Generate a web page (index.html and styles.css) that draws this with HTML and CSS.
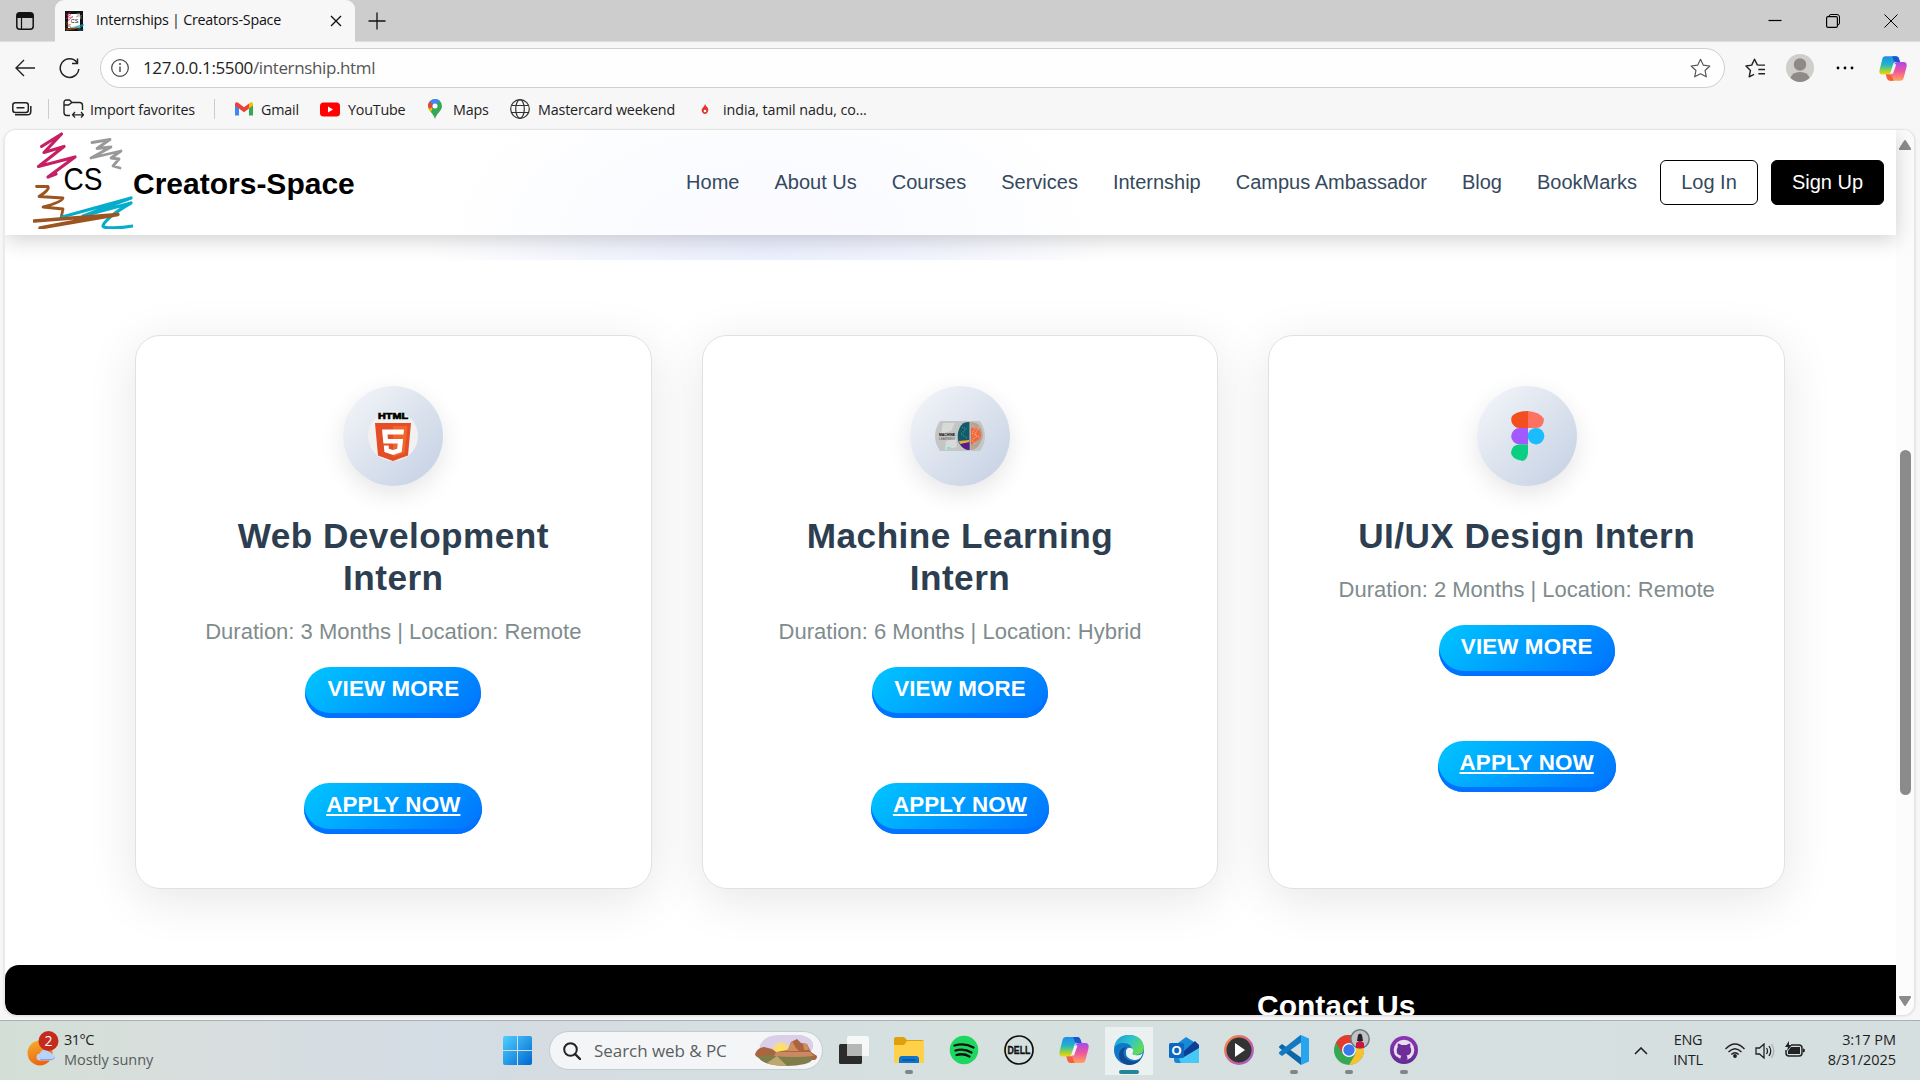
FILE: index.html
```html
<!DOCTYPE html>
<html lang="en">
<head>
<meta charset="utf-8">
<title>Internships | Creators-Space</title>
<link rel="stylesheet" href="styles.css">
</head>
<body>
<svg class="defs" width="0" height="0">
  <defs>
    <linearGradient id="cpA" x1="0" y1="0" x2="0" y2="1"><stop offset="0" stop-color="#1f8cf0"/><stop offset=".45" stop-color="#22b5c8"/><stop offset=".75" stop-color="#8fd04b"/><stop offset="1" stop-color="#ffd400"/></linearGradient>
    <linearGradient id="cpB" x1="0" y1="0" x2="0" y2="1"><stop offset="0" stop-color="#a44bf0"/><stop offset=".5" stop-color="#f0569a"/><stop offset="1" stop-color="#ffa45c"/></linearGradient>
    <linearGradient id="win" x1="0" y1="0" x2="1" y2="1"><stop offset="0" stop-color="#4fd0ff"/><stop offset="1" stop-color="#0067cf"/></linearGradient>
    <linearGradient id="edgeTop" x1="0" y1="0" x2="1" y2=".6"><stop offset="0" stop-color="#1695dc"/><stop offset=".5" stop-color="#2dc3cf"/><stop offset="1" stop-color="#63dc55"/></linearGradient>
    <linearGradient id="sun" x1="0" y1="0" x2=".4" y2="1"><stop offset="0" stop-color="#f5b32e"/><stop offset="1" stop-color="#ef6511"/></linearGradient>
    <linearGradient id="ring" x1="0" y1="0" x2="1" y2="1"><stop offset="0" stop-color="#ff8a35"/><stop offset=".6" stop-color="#c65f9f"/><stop offset="1" stop-color="#9b63d8"/></linearGradient>
    <linearGradient id="gh" x1="0" y1="0" x2="0" y2="1"><stop offset="0" stop-color="#8e35b5"/><stop offset="1" stop-color="#602a8f"/></linearGradient>
    <symbol id="copilot" viewBox="0 0 30 28">
      <path d="M7 1h11c2 0 3 1 3.600 3l1 3h-4c-2 0-3 1-3.600 3l-2.500 8c-.5 1.500-1.500 2.500-3 2.500H3.500C1 20.500-.2 18.500.6 15.500L3.500 4C4 2 5 1 7 1Z" fill="url(#cpA)"/>
      <path d="M14 1h4c2 0 3 1 3.600 3l1 3h-4c-2 0-3-1-3.400-3-.3-1.500-.6-2.500-1.200-3Z" fill="#1c55cf"/>
      <path d="M23 27H12c-2 0-3-1-3.600-3l-1-3.500h3c2 0 3-1 3.600-3l2.500-8c.5-1.500 1.500-2.500 3-2.500h7c2.500 0 3.700 2 3 5L26.500 24c-.5 2-1.500 3-3.500 3Z" fill="url(#cpB)"/>
      <path d="M16 27h-4c-2 0-3-1-3.600-3l-1-3.500h3c2 0 3.400 1 3.900 3 .3 1.500 1 2.900 1.700 3.500Z" fill="#f4603a"/>
      <path d="M16 9.500h2.500L15 19.500h-3Z" fill="#f3f5f5"/>
    </symbol>
    <symbol id="scribble" viewBox="0 0 100 98">
      <g fill="none" stroke-linejoin="round" stroke-linecap="round">
        <path d="M8.500 15.500 28.500 3 11 21.500 31 15.500 5.500 35.500 42 26 15 46 23 43" stroke="#c61f62" stroke-width="3.200"/>
        <path d="M59 11.500 77 8.500 64 17.500 78 16 58 27 88 20 78 27 86 28 80 35 87 37" stroke="#999" stroke-width="2.800"/>
        <path d="M3.500 55.500H15q2 3-9 10l24 1.500q-1 4-20 9l20 2-2 9" stroke="#9c5420" stroke-width="2.800"/>
        <path d="M29 86 98 67 50 85 98 72 C80 82 70 92 70 95 S88 97 100 95" stroke="#05accb" stroke-width="3.200"/>
        <path d="M1 90 85 83.500 7 97 60 87" stroke="#9c5420" stroke-width="3.400"/>
      </g>
      <text x="30.500" y="59" font-family="Liberation Sans, Arial, sans-serif" font-size="31" textLength="39" lengthAdjust="spacingAndGlyphs">CS</text>
    </symbol>
  </defs>
</svg>

<div class="window">
  <header class="tabbar">
    <svg class="tab-menu" viewBox="0 0 18 18"><rect x=".8" y=".8" width="16.400" height="16.400" rx="3" fill="none" stroke="#111" stroke-width="1.500"/><path d="M1 6V3.500Q1 1 3.500 1h11Q17 1 17 3.500V6Z" fill="#111"/><path d="M5.500 5v12" stroke="#111" stroke-width="1.200"/></svg>
    <div class="tab">
      <svg class="favicon" viewBox="0 0 19 20"><rect width="18" height="20" fill="#111"/><rect x="3" y="3" width="12" height="14" fill="#fff"/><use href="#scribble" x="0" y="0" width="19" height="20"/></svg>
      <span class="tab-title">Internships | Creators-Space</span>
      <svg class="tab-close" viewBox="0 0 12 12"><path d="m1 1 10 10M11 1 1 11" stroke="#111" stroke-width="1.400"/></svg>
    </div>
    <svg class="new-tab" viewBox="0 0 18 18"><path d="M9 .5v17M.5 9h17" stroke="#111" stroke-width="1.300"/></svg>
    <div class="window-buttons">
      <svg viewBox="0 0 14 14"><path d="M.5 6.500h13" stroke="#000" stroke-width="1.200"/></svg>
      <svg viewBox="0 0 14 14"><path d="M3 2.500q0-2 2-2h6q2.500 0 2.500 2.500v6q0 2-2 2" fill="none" stroke="#000"/><rect x=".6" y="2.600" width="10.800" height="10.800" rx="1.500" fill="none" stroke="#000" stroke-width="1.200"/></svg>
      <svg viewBox="0 0 14 14"><path d="m.5.5 13 13M13.500.5l-13 13" stroke="#000"/></svg>
    </div>
  </header>

  <div class="toolbar">
    <svg class="back" viewBox="0 0 20 18"><path d="M9 1 1 9l8 8M1 9h19" fill="none" stroke="#222" stroke-width="1.400"/></svg>
    <svg class="reload" viewBox="0 0 21 21"><path d="M18 4.500A9.300 9.300 0 1 0 19.800 11M18.500.5v5h-5.500" fill="none" stroke="#222" stroke-width="1.500"/></svg>
    <div class="address">
      <svg class="info" viewBox="0 0 18 18"><circle cx="9" cy="9" r="8.300" fill="none" stroke="#444" stroke-width="1.200"/><path d="M9 7.500v5.500" stroke="#444" stroke-width="1.400"/><circle cx="9" cy="5" r="1" fill="#444"/></svg>
      <span class="url">127.0.0.1:5500<i>/internship.html</i></span>
      <svg class="star" viewBox="0 0 22 21"><path d="m11 1.300 3 6.200 6.800.9-5 4.700 1.300 6.700-6.100-3.300-6.100 3.300 1.300-6.700-5-4.700 6.800-.9Z" fill="none" stroke="#555" stroke-width="1.200" stroke-linejoin="round"/></svg>
    </div>
    <svg class="favs" viewBox="0 0 22 21"><path d="m13 7.500-3-6.200-3 6.200-6 .9 4.700 4.700-1.300 6.700 5-2.700M13 7.500h8M14 12h7M14 16.500h7" fill="none" stroke="#222" stroke-width="1.500" stroke-linejoin="round"/></svg>
    <svg class="avatar" viewBox="0 0 28 28"><circle cx="14" cy="14" r="14" fill="#d0ceca"/><circle cx="14" cy="10.500" r="6.200" fill="#8d8a87"/><path d="M4.500 24Q6 18 14 18t9.500 6Q19 28 14 28t-9.500-4Z" fill="#8d8a87"/></svg>
    <svg class="dots" viewBox="0 0 18 4"><circle cx="2" cy="2" r="1.400"/><circle cx="9" cy="2" r="1.400"/><circle cx="16" cy="2" r="1.400"/></svg>
    <svg class="copilot"><use href="#copilot"/></svg>
  </div>

  <div class="bookmarks">
    <svg class="bm-hide" viewBox="0 0 20 14"><rect x=".8" y=".8" width="15.500" height="9.800" rx="2.500" fill="none" stroke="#222" stroke-width="1.500"/><path d="M4.500 5.700h8M3 12.800h12.500q3.300 0 3.300-3.300V4" fill="none" stroke="#222" stroke-width="1.500"/></svg>
    <i class="rule rule-a"></i>
    <svg class="bm-folder" viewBox="0 0 21 20"><path d="M7 16.500H4Q1 16.500 1 13.500V3.500Q1 1 3.500 1h3l2.500 2.500h7.500q3 0 3 3V11M1 6h4.500L9 3.500" fill="none" stroke="#222" stroke-width="1.400"/><path d="m12 13-2.500 2.800L12 18.600M18 13l2.500 2.800-2.500 2.800M9.500 15.800h11" fill="none" stroke="#222" stroke-width="1.300"/></svg>
    <span class="bm-text t-import">Import favorites</span>
    <i class="rule rule-b"></i>
    <svg class="bm-gmail" viewBox="0 0 18 14"><path d="M0 2v11.500h4V5Z" fill="#4285f4"/><path d="M18 2v11.500h-4V5Z" fill="#34a853"/><path d="M14 6.500V1.600l1.200-1Q18-.6 18 2.400v1.200Z" fill="#fbbc04"/><path d="M0 3.600V2.400Q0-.6 2.800.6L9 5.200 14 1.500v5L9 10.200Z" fill="#ea4335"/></svg>
    <span class="bm-text t-gmail">Gmail</span>
    <svg class="bm-yt" viewBox="0 0 20 14"><rect width="20" height="14" rx="3.500" fill="#f00"/><path d="m8 4 5 3-5 3Z" fill="#fff"/></svg>
    <span class="bm-text t-yt">YouTube</span>
    <svg class="bm-map" viewBox="0 0 14 20"><path d="M7 0a7 7 0 0 1 7 7c0 5-5 6.500-7 13C5 13.500 0 12 0 7a7 7 0 0 1 7-7Z" fill="#34a853"/><path d="M0 7.500 4.500 9 3 13Q0 10.500 0 7.500Z" fill="#fbbc04"/><path d="M7 0a7 7 0 0 1 5 2L4 9.500 1.700 2.600Q4 0 7 0Z" fill="#4285f4"/><path d="M1.700 2.600 5 5.500 2 10Q0 8 0 6.500t1.700-3.900Z" fill="#ea4335"/><circle cx="7" cy="7" r="2.500" fill="#fff"/></svg>
    <span class="bm-text t-map">Maps</span>
    <svg class="bm-globe" viewBox="0 0 20 20" fill="none" stroke="#333" stroke-width="1.200"><circle cx="10" cy="10" r="9.300"/><ellipse cx="10" cy="10" rx="4.300" ry="9.300"/><path d="M1.500 6.500h17M1.500 13.500h17"/></svg>
    <span class="bm-text t-master">Mastercard weekend</span>
    <svg class="bm-drop" viewBox="0 0 8 10"><path d="M4 0q1 2 2.500 3.500Q8 5 7 7.500 6 10 4 10T.8 7.500Q0 5 2 3.500 3.500 2 4 0Z" fill="#e3342b"/><circle cx="4" cy="7" r="1.300" fill="#fff"/></svg>
    <span class="bm-text t-india">india, tamil nadu, co...</span>
  </div>

  <div class="viewport">
    <div class="page">
      <nav class="nav">
        <svg class="logo"><use href="#scribble"/></svg>
        <strong class="brand">Creators-Space</strong>
        <div class="links">
          <a>Home</a><a>About Us</a><a>Courses</a><a>Services</a><a>Internship</a><a>Campus Ambassador</a><a>Blog</a><a>BookMarks</a>
        </div>
        <a class="login">Log In</a>
        <a class="signup">Sign Up</a>
      </nav>
      <div class="hero-end"></div>
      <main class="cards">
        <article class="card">
          <div class="icon"><svg viewBox="0 0 50 50"><circle cx="25" cy="25" r="25" fill="#f1f1f1"/><text x="10" y="8" font-family="Liberation Sans, Arial, sans-serif" font-weight="bold" font-size="9" stroke="#000" stroke-width=".7" textLength="30" lengthAdjust="spacingAndGlyphs">HTML</text><path d="M7 12h36l-3 32.500L25 50l-15-5.500Z" fill="#e44d26"/><path d="M25 15h14.500l-2.700 27L25 46Z" fill="#f16529"/><path d="M14 18.500h22l-.5 5H19.500l.4 4.500h15.200l-1.300 13-8.800 3-8.600-3-.6-6.500h4.800l.3 3.300 4.100 1.300 4.200-1.300.5-5.300H15.400Z" fill="#fff"/></svg></div>
          <h2>Web Development Intern</h2>
          <p>Duration: 3 Months | Location: Remote</p>
          <button class="btn">VIEW MORE</button>
          <a class="btn apply">APPLY NOW</a>
        </article>
        <article class="card">
          <div class="icon"><svg viewBox="0 0 50 50"><path d="M5 10h40q10 15 0 30H5Q-5 25 5 10Z" fill="#c4c6c6"/><path d="M8 12h12l-4 8-10 3ZM11 30l10-3 1 9-12 3Z" fill="#d8dada"/><text x="4" y="25" font-family="Liberation Sans, Arial, sans-serif" font-weight="bold" font-size="4" textLength="16" lengthAdjust="spacingAndGlyphs">MACHINE</text><text x="4" y="29" font-family="Liberation Sans, Arial, sans-serif" font-size="4" fill="#555" textLength="16" lengthAdjust="spacingAndGlyphs">LEARNING</text><path d="M34.500 11q-7-1-10 6t-1 14q4 8 11 8Z" fill="#15596a"/><path d="M24 31q4 8 10.500 8V29Z" fill="#5b1b88"/><path d="m24 30 10.500-1v2L25 33Z" fill="#e5b53b"/><path d="M35.500 11q8 0 11 7t-1 13q-3 8-10 8Z" fill="#b7a294"/><path d="M36 17q6-1 9 3 3 8-4 10l-5 4Z" fill="#ef6844"/><path d="m37 14 3 4-3 4 5 3-5 4 3 4M44 16l-4 7 5 4" fill="none" stroke="#ffc36a" stroke-width="1" stroke-dasharray="1 1"/><path d="m27 16 4 2-5 5 6 4" fill="none" stroke="#2c9a8c" stroke-width="1.200" stroke-dasharray="1 1"/><path d="M12 37h4" stroke="#72e5de" stroke-width="2"/></svg></div>
          <h2>Machine Learning Intern</h2>
          <p>Duration: 6 Months | Location: Hybrid</p>
          <button class="btn">VIEW MORE</button>
          <a class="btn apply">APPLY NOW</a>
        </article>
        <article class="card">
          <div class="icon"><svg viewBox="0 0 50 50"><path d="M26 0v17h-9a8.500 8.500 0 0 1-7-12Q15 0 26 0Z" fill="#f24e1e"/><path d="M26 0q12 1 16 8-.5 9-8 9h-8Z" fill="#ff7262"/><path d="M26 17v16.500h-8.500a8.250 8.250 0 0 1 0-16.500Z" fill="#a259ff"/><circle cx="34" cy="25.200" r="8.300" fill="#1abcfe"/><path d="M26 33.500V42q-1 7-5 8-12-2-12-8.500 1-8 8.500-8Z" fill="#0acf83"/></svg></div>
          <h2>UI/UX Design Intern</h2>
          <p>Duration: 2 Months | Location: Remote</p>
          <button class="btn">VIEW MORE</button>
          <a class="btn apply">APPLY NOW</a>
        </article>
      </main>
      <footer class="footer"><h3>Contact Us</h3></footer>
    </div>
    <div class="scrollbar">
      <svg viewBox="0 0 12 10"><path d="M6 0q.7 0 1.200 1L12 8.500q.3 1.500-1 1.500H1Q-.3 10 0 8.500L4.800 1Q5.300 0 6 0Z" fill="#8b8b8b"/></svg>
      <i class="thumb"></i>
      <svg class="down" viewBox="0 0 12 10"><path d="M6 0q.7 0 1.200 1L12 8.500q.3 1.500-1 1.500H1Q-.3 10 0 8.500L4.800 1Q5.300 0 6 0Z" fill="#8b8b8b"/></svg>
    </div>
  </div>

  <div class="taskbar">
    <div class="weather">
      <svg viewBox="0 0 32 35"><circle cx="13" cy="22" r="12.500" fill="url(#sun)"/><path d="M13 29.500a3.500 3.500 0 0 1 0-7 5 5 0 0 1 9-1.500 4 4 0 0 1 3 2q3 .5 3 3t-3 3.500Z" fill="#b9d2fb"/><path d="M13 28.500h12q2-.5 2.500-2" fill="none" stroke="#7fa6e8"/><circle cx="21.500" cy="10" r="10" fill="#c42b1c"/><text x="21.500" y="15" text-anchor="middle" font-family="Open Sans, sans-serif" font-size="14" fill="#fff">2</text></svg>
      <div class="weather-text"><span class="temp">31°C</span><span class="sky">Mostly sunny</span></div>
    </div>
    <svg class="start" viewBox="0 0 29 29"><path d="M2 0h12v14H0V2Q0 0 2 0ZM15 0h12q2 0 2 2v12H15ZM0 15h14v14H2q-2 0-2-2ZM15 15h14v12q0 2-2 2H15Z" fill="url(#win)"/></svg>
    <div class="search">
      <svg class="lens" viewBox="0 0 18 18"><circle cx="7.500" cy="7.500" r="6.300" fill="none" stroke="#222" stroke-width="2"/><path d="m12 12 5 5" stroke="#222" stroke-width="2.400" stroke-linecap="round"/></svg>
      <span>Search web &amp; PC</span>
      <svg class="scene" viewBox="0 0 62 31"><path d="M5 10Q10 0 24 0h22q14 3 12 13L54 20H4Z" fill="#d9cfe8"/><circle cx="26" cy="15" r="8" fill="#f6d98c"/><circle cx="26" cy="15" r="4.500" fill="#ffe25a"/><path d="M0 19q2-6 9-7l8 2 4 3 12-2 3-8 6-3 4 4 6 1 4 8 6 4q0 4-3 4l-52-1Q0 22 0 19Z" fill="#a9653f"/><path d="m33 14 4-8 4 7 3 3H30Zm15-6 4 1 2 6h-5Z" fill="#d28d5d"/><path d="M3 22q10-3 20-2l35 2q0 5-8 7-18 4-36 0-8-2-11-7Z" fill="#7f7d4a"/><path d="M21 17h34l4 4q-18 2-40 0Z" fill="#c98a63"/><path d="m22 21-10 7q5 3 20 3Z" fill="#bda86f"/></svg>
    </div>
    <div class="apps">
      <div class="app"><svg viewBox="0 0 30 30"><rect y="9" width="23" height="20" rx="1.500" fill="#2b2b2b"/><rect x="8" y="1" width="22" height="20" rx="1.500" fill="#f8f8f8" opacity=".95"/><path d="M8 9h15v12H9q-1 0-1-1Z" fill="#b5b6b6"/></svg></div>
      <div class="app run"><svg viewBox="0 0 30 30"><path d="M0 4q0-2 2-2h8l3 3h15q2 0 2 2v5H0Z" fill="#e0a009"/><path d="M0 10h10l3-4h17v22H0Z" fill="#ffd04a"/><path d="M5 28v-4q0-3 3-3h14q3 0 3 3v4Z" fill="#0f74cc"/><path d="M9 25h12" stroke="#09529b" stroke-width="1.500" stroke-linecap="round"/></svg></div>
      <div class="app"><svg viewBox="0 0 30 30"><circle cx="15" cy="15" r="14.300" fill="#1ed760"/><path d="M5.500 10.500q10-3 19 2M6.500 15.500q8.500-2.500 16 2M7.500 20q7-2 13 1.500" fill="none" stroke="#111" stroke-width="2.300" stroke-linecap="round"/></svg></div>
      <div class="app"><svg viewBox="0 0 30 30"><circle cx="15" cy="15" r="14" fill="none" stroke="#111" stroke-width="1.700"/><text x="3.500" y="19" font-family="Liberation Sans, Arial, sans-serif" font-weight="bold" font-size="10.500" textLength="23" lengthAdjust="spacingAndGlyphs" stroke="#111" stroke-width=".3" fill="#111">DELL</text></svg></div>
      <div class="app"><svg><use href="#copilot"/></svg></div>
      <div class="app active"><svg viewBox="0 0 30 30"><circle cx="15" cy="15" r="15" fill="#1177c8"/><path d="M0 13Q2 0 15 0t15 12q0 8-9 8-4 0-3-3Q19 8 9 8 3 8 0 13Z" fill="url(#edgeTop)"/><path d="M12 12Q6 20 14 25q8 4 14-3-4 8-13 8Q4 28 5 19q1-6 7-7Z" fill="#114a91"/><path d="M12 16q1-4 5-3 3 1 2 4-2 3 2 3 6 1 8-3-2 9-9 8-9-1-8-9Z" fill="#edf3f3"/></svg></div>
      <div class="app"><svg viewBox="0 0 30 30"><path d="m5 11 12-9 13 8v16q0 2-2 2H8q-3 0-3-3Z" fill="#1689da"/><path d="m10 24 20-13v15q0 2-2 2H12Z" fill="#48c8f6"/><path d="m14 17 12-11 4 4v3L15 22Z" fill="#0c3f93"/><rect y="8" width="15" height="15" rx="1.500" fill="#0b68be"/><text x="7.500" y="20" text-anchor="middle" font-family="Liberation Sans, Arial, sans-serif" font-weight="bold" font-size="13" fill="#fff">O</text></svg></div>
      <div class="app"><svg viewBox="0 0 30 30"><circle cx="15" cy="15" r="13.700" fill="#333" stroke="url(#ring)" stroke-width="2.400"/><path d="m11 8 10 7-10 7Z" fill="#fff"/></svg></div>
      <div class="app run"><svg viewBox="0 0 30 30"><path d="M0 11.500 3 9l19 13.500V30L.5 13Q0 12.500 0 11.500Z" fill="#0c67a9"/><path d="M22 0v7.500L3 21 .3 19q-.6-1 0-2L20.500.8Z" fill="#1279c2"/><path d="m22 0 8 3.500v23L22 30Z" fill="#27a5ee"/></svg></div>
      <div class="app run"><svg viewBox="0 0 30 30"><circle cx="15" cy="15" r="15" fill="#34a853"/><path d="M2 7.500A15 15 0 0 1 28 7.500L15 9l-6.500 9.500Z" fill="#e33b2e"/><path d="M28 7.500A15 15 0 0 1 15 30l7-12V8Z" fill="#fbc02d"/><circle cx="15" cy="15" r="7" fill="#fff"/><circle cx="15" cy="15" r="5.700" fill="#3878ec"/></svg>
        <svg class="badge" viewBox="0 0 20 20"><circle cx="10" cy="10" r="9.200" fill="#bfc3c4" stroke="#6e777a" stroke-width="1.500"/><path d="M7 12 8 6q2-3 4 0l1 6Z" fill="#242027"/><path d="M6 19v-5l3-2h2l3 2v5Z" fill="#c61841"/></svg></div>
      <div class="app run"><svg viewBox="0 0 30 30"><circle cx="15" cy="15" r="14" fill="url(#gh)"/><circle cx="15" cy="15" r="10.300" fill="#e8dfee"/><path d="M9 8.500q2 0 3.500 1.500h5Q19 8.500 21 8.500q.7 1.500.2 3.500 1.300 1.500 1 4-.5 4-4.700 4.500 1 1 1 2.500v4h-7v-2.500q-3.500.5-4.500-3 2 0 2.500 1.200.5 1 2 .5 0-1.500.8-2.500Q7.500 20 7.700 15.500q0-2 1.100-3.500Q8.300 10 9 8.500Z" fill="#6e2d99"/></svg></div>
    </div>
    <div class="tray">
      <svg class="chev" viewBox="0 0 14 8"><path d="m1 7 6-6 6 6" fill="none" stroke="#222" stroke-width="1.600"/></svg>
      <div class="lang"><span>ENG</span><span>INTL</span></div>
      <svg class="wifi" viewBox="0 0 20 15" fill="none" stroke="#222" stroke-width="1.400"><path d="M.5 6Q10-4 19.500 6M3.500 9q6.500-6.500 13 0M6.300 11.500q3.700-3.500 7.400 0"/><circle cx="10" cy="13" r="1.200" fill="#222"/></svg>
      <svg class="vol" viewBox="0 0 20 16" fill="none" stroke="#222" stroke-width="1.300"><path d="M1 5h3.500L9 1v14l-4.500-4H1ZM11.500 5q2 3 0 6M14 3q3.500 5 0 10"/><path d="M16.500 1q4.500 7 0 14" stroke="#aab2b2"/></svg>
      <svg class="bat" viewBox="0 0 20 16"><path d="M6 4h8q3 0 3 3v5q0 3-3 3H4q-3 0-3-3V9" fill="none" stroke="#222" stroke-width="1.500"/><path d="M6 6h9v7H3v-3Z" fill="#222"/><path d="M18 7.500q2 0 2 2t-2 2ZM4 0 0 6h3l-1 4 5-6H4Z" fill="#222"/></svg>
      <div class="clock"><span>3:17 PM</span><span class="date">8/31/2025</span></div>
    </div>
  </div>
</div>
</body>
</html>
```
FILE: styles.css
```css
* { box-sizing: border-box; }
body { margin: 0; overflow: hidden; font-family: "Liberation Sans", Arial, sans-serif; }
svg { display: block; flex: none; }
i { font-style: normal; }
.defs { position: absolute; }
.window { width: 1920px; height: 1080px; display: flex; flex-direction: column; background: #f7f7f7; }
.tabbar, .toolbar, .bookmarks, .taskbar { font-family: "Open Sans", "Noto Sans", sans-serif; white-space: nowrap; display: flex; align-items: center; flex: none; }

.tabbar { height: 42px; background: #cdcdcd; border-bottom: 1px solid #dedede; }
.tab-menu { width: 18px; height: 18px; margin: 0 21px 0 16px; }
.tab { width: 300px; height: 42px; background: #f7f7f7; border-radius: 9px 9px 0 0; display: flex; align-items: center; padding-left: 10px; box-shadow: 0 1px 0 #f7f7f7; }
.favicon { width: 19px; height: 20px; }
.tab-title { width: 234px; margin-left: 12px; padding-bottom: 2px; font-size: 14.300px; color: #111; letter-spacing: -.24px; }
.tab-close { width: 12px; height: 12px; }
.new-tab { width: 18px; height: 18px; margin-left: 13px; }
.window-buttons { margin-left: auto; display: flex; gap: 44px; padding: 1px 22px 0 0; }
.window-buttons svg { width: 14px; height: 14px; }

.toolbar { height: 52px; }
.back { width: 20px; height: 18px; margin-left: 15px; }
.reload { width: 21px; height: 21px; margin: 0 20px 0 24px; }
.address { width: 1625px; height: 40px; border: 1px solid #cecece; border-radius: 20px; background: #fefefe; display: flex; align-items: center; padding: 0 13px 0 10px; }
.info { width: 18px; height: 18px; }
.url { margin-left: 14px; padding-bottom: 2px; font-size: 17px; color: #222; letter-spacing: -.37px; }
.url i { color: #555; }
.star { width: 21px; height: 20px; margin-left: auto; }
.favs { width: 21px; height: 20px; margin-left: 20px; }
.avatar { width: 28px; height: 28px; margin-left: 20px; }
.dots { width: 18px; height: 4px; margin: 0 25px 0 22px; }
.copilot { width: 28px; height: 27px; }

.bookmarks { height: 35px; padding-bottom: 5px; }
.bm-text { font-size: 14.300px; color: #222; }
.bm-hide { width: 20px; height: 14px; margin-left: 12px; }
.rule { width: 1px; height: 20px; background: #ccc; }
.rule-a { margin: 0 14px 0 16px; }
.rule-b { margin-right: 20px; }
.bm-folder { width: 21px; height: 20px; margin-right: 6px; }
.t-import { width: 124px; letter-spacing: -.13px; }
.bm-gmail { width: 18px; height: 14px; }
.t-gmail { margin-left: 8px; width: 59px; letter-spacing: -.2px; }
.bm-yt { width: 20px; height: 17px; }
.t-yt { margin-left: 8px; width: 80px; letter-spacing: -.2px; }
.bm-map { width: 14px; height: 20px; }
.t-map { margin-left: 11px; width: 57px; letter-spacing: -.2px; }
.bm-globe { width: 20px; height: 20px; }
.t-master { margin-left: 8px; width: 163px; letter-spacing: -.16px; }
.bm-drop { width: 8px; height: 10px; }
.t-india { margin-left: 14px; letter-spacing: -.08px; }

.viewport { width: 1911px; height: 886px; margin: 0 5px 0 4px; flex: none; display: flex; overflow: hidden; background: #fff; border-radius: 12px; border: 1px solid #e4e4e4; border-left-color: #e9e9e9; border-bottom: 0; box-shadow: 0 1px 3px #0002; }
.page { width: 1891px; flex: none; display: flex; flex-direction: column; }
.nav { height: 105px; flex: none; display: flex; align-items: center; padding: 0 12px 1px 28px; z-index: 1; background: radial-gradient(ellipse 340px 180px at 765px 105px, #fbfbff, #fbfcff 50%, #fff); box-shadow: 0 5px 20px #0000002e; }
.logo { width: 100px; height: 98px; margin-top: -4px; }
.brand { font-size: 30px; color: #000; padding-top: 3px; }
.links { margin-left: auto; display: flex; gap: 35px; margin-right: 23px; }
.nav a { font-size: 20px; color: #34495e; white-space: nowrap; }
.nav .login, .nav .signup { height: 45px; line-height: 43px; text-align: center; border: 1px solid #000; border-radius: 6px; }
.nav .login { width: 98px; margin-right: 13px; }
.nav .signup { width: 113px; background: #000; color: #fff; }
.hero-end { height: 25px; flex: none; background: radial-gradient(ellipse 340px 200px at 765px 12px, #eceffe, #f2f4fe 45%, #fff); }
.cards { flex: none; height: 705px; padding: 75px 111px 76px 130px; display: flex; gap: 50px; }
.card { flex: 1; border: 1px solid #e1e1e1; border-radius: 25px; background: #fff; padding: 50px 40px 0; box-shadow: 0 10px 50px #0000001a; display: flex; flex-direction: column; align-items: center; text-align: center; }
.icon { width: 100px; height: 100px; border-radius: 50%; background: linear-gradient(135deg, #f5f7fa, #c3cfe2); box-shadow: 0 8px 25px #0000001a; display: flex; align-items: center; justify-content: center; }
.icon svg { width: 50px; height: 50px; }
.card h2 { margin: 29px 20px 0; font-size: 35.200px; line-height: 42px; letter-spacing: .45px; color: #2c3e50; }
.card p { margin: 19px 0 0; font-size: 22px; line-height: 28px; color: #7f8c8d; white-space: nowrap; }
.btn { margin: 21px 0 0; height: 51px; padding: 0 22px 8px; border: 0; border-radius: 25px; font: bold 22.400px/43px "Liberation Sans", Arial, sans-serif; letter-spacing: .12px; color: #fff; background: linear-gradient(135deg, #00c6ff, #0072ff); box-shadow: inset 0 -5px 0 #0072ff; white-space: nowrap; }
.apply { margin-top: 65px; text-decoration: underline; }
.footer { flex: none; height: 50px; background: #000; color: #fff; border-radius: 14px 0 0 12px; padding: 24px 0 0 1252px; overflow: hidden; }
.footer h3 { margin: 0; font-size: 30px; line-height: 34px; }
.scrollbar { flex: 1; background: #fcfcfc; display: flex; flex-direction: column; align-items: center; padding-top: 10px; }
.scrollbar svg { width: 12px; height: 10px; }
.thumb { width: 11px; height: 345px; border-radius: 6px; background: #8b8b8b; margin-top: 300px; }
.scrollbar .down { transform: rotate(180deg); margin-top: 201px; }

.taskbar { height: 60px; margin-top: 5px; border-top: 1px solid #a9b1b3; background: linear-gradient(90deg, #d3dfd6 0, #d8dedd 180px, #d4dce5 440px, #d5dde2 560px, #d5e0df 950px, #d5dfe0 1920px); color: #1e1e1e; font-size: 14.500px; }
.weather { display: flex; width: 503px; padding-left: 27px; gap: 5px; align-items: center; }
.weather svg { width: 32px; height: 35px; margin-bottom: 4px; }
.weather-text, .lang, .clock { display: flex; flex-direction: column; line-height: 20px; padding-bottom: 2px; }
.temp { letter-spacing: -.5px; }
.sky { color: #555c5c; }
.start { width: 29px; height: 29px; }
.search { margin-left: 17px; width: 274px; height: 39px; border-radius: 20px; background: #f3f5f7; border: 1px solid #c5cccf; display: flex; align-items: center; padding-left: 13px; font-size: 17px; color: #5a5f61; letter-spacing: -.05px; }
.lens { width: 18px; height: 18px; margin-right: 13px; }
.search span { width: 161px; }
.scene { width: 62px; height: 31px; }
.apps { display: flex; margin-left: 3px; }
.app { position: relative; width: 55px; height: 59px; padding-bottom: 1px; display: flex; align-items: center; justify-content: center; }
.app svg { width: 30px; height: 30px; }
.app.run::after, .app.active::after { content: ""; position: absolute; bottom: 6px; left: 23.500px; width: 8px; height: 4px; border-radius: 2px; background: #808686; }
.app.active { background: linear-gradient(#ebf1f1, #ebf1f1) center / 48px 48px no-repeat; }
.app.active::after { left: 17.500px; width: 20px; background: #25849a; }
.app .badge { position: absolute; left: 29px; top: 8px; width: 20px; height: 20px; }
.tray { margin-left: auto; display: flex; align-items: center; padding-right: 24px; }
.chev { width: 14px; height: 8px; margin-right: 23px; }
.lang { width: 34px; text-align: center; margin-right: 20px; letter-spacing: -.3px; }
.wifi { width: 20px; height: 15px; margin-right: 10px; }
.vol { width: 20px; height: 16px; margin-right: 10px; }
.bat { width: 20px; height: 16px; margin-bottom: 4px; }
.clock { text-align: right; width: 91px; letter-spacing: -.05px; }
```
